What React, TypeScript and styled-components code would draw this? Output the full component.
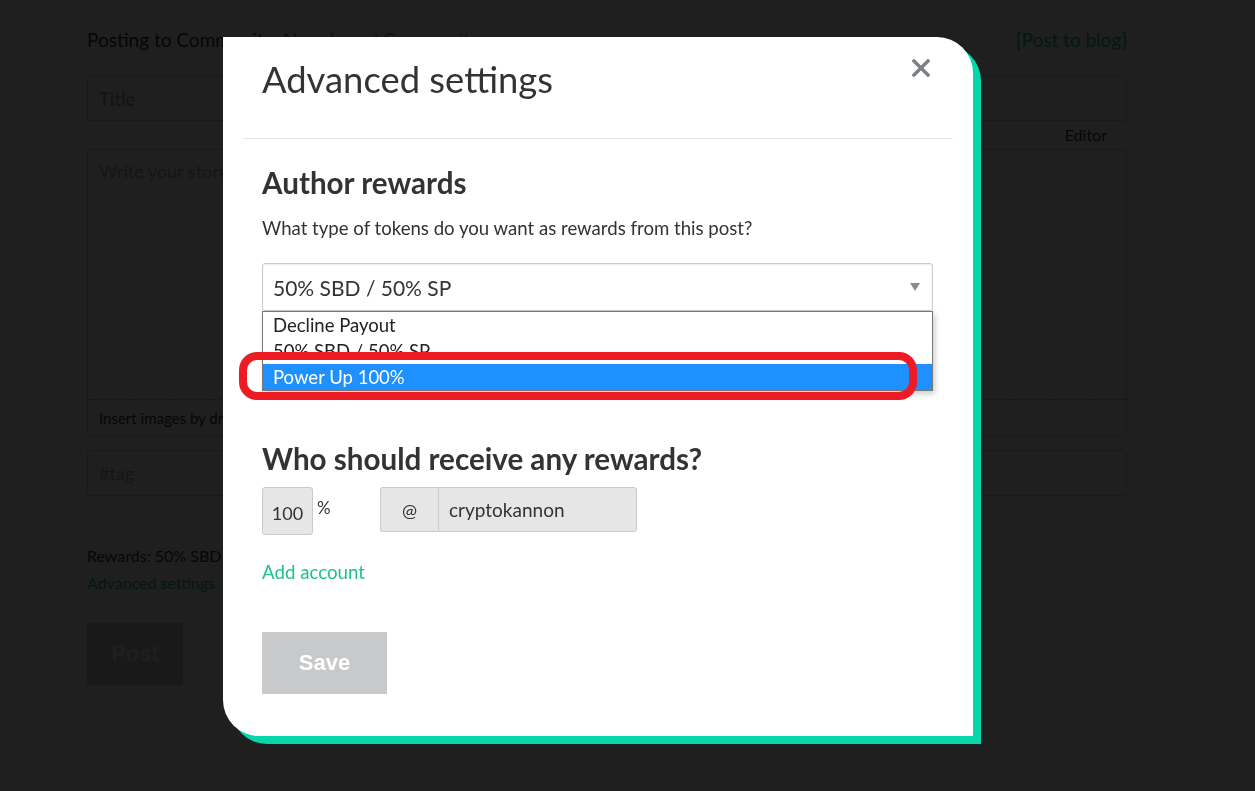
import React from "react";
import styled, { createGlobalStyle } from "styled-components";

const Global = createGlobalStyle`
  html, body { margin: 0; padding: 0; background: #ffffff; }
  body { font-family: Lato, "Source Sans Pro", "Liberation Sans", sans-serif; color: #333; }
  * { box-sizing: border-box; }
`;

const FONT = `Lato, "Liberation Sans", sans-serif`;

/* ---------- underlying page ---------- */
const Page = styled.div`
  width: 1255px;
  height: 791px;
  overflow: hidden;
  background: #fff;
  padding: 28px 128px 0 87px;
  font-family: ${FONT};
`;

const TopLine = styled.div`
  display: flex;
  justify-content: space-between;
  font-size: 19px;
  line-height: 24px;
  color: #333;
`;

const GreenLink = styled.span`
  color: #1fbf8f;
`;

const PageInput = styled.div<{ $h: number }>`
  height: ${(p) => p.$h}px;
  border: 1px solid #cacaca;
  border-radius: 3px;
  padding: 0 11px;
  display: flex;
  align-items: center;
  font-size: 18px;
  color: #aaa;
`;

const TitleInput = styled(PageInput)`
  margin-top: 24px;
  font-weight: 700;
`;

const EditorLabel = styled.div`
  text-align: right;
  padding-right: 20px;
  font-size: 16px;
  line-height: 28px;
  color: #333;
`;

const TextArea = styled.div`
  border: 1px solid #cacaca;
  border-radius: 3px;
  height: 287px;
  display: flex;
  flex-direction: column;
`;

const TextAreaBody = styled.div`
  flex: 1;
  padding: 10px 11px;
  font-size: 18px;
  color: #aaa;
`;

const DropZone = styled.div`
  height: 36px;
  border-top: 1px dashed #aaa;
  padding: 0 11px;
  display: flex;
  align-items: center;
  font-size: 15px;
  color: #333;
`;

const TagInput = styled(PageInput)`
  margin-top: 14px;
`;

const RewardsText = styled.div`
  margin-top: 46px;
  font-size: 16px;
  line-height: 27px;
  color: #333;
`;

const AdvancedLink = styled.div`
  font-size: 16px;
  line-height: 27px;
  color: #1fbf8f;
`;

const GrayButton = styled.div<{ $w: number }>`
  width: ${(p) => p.$w}px;
  height: 62px;
  background: #c8c9cb;
  color: #fff;
  font-family: "Liberation Sans", Arial, sans-serif;
  font-weight: 700;
  font-size: 22px;
  display: flex;
  align-items: center;
  justify-content: center;
`;

const PostButton = styled(GrayButton)`
  margin-top: 27px;
`;

/* ---------- overlay & modal ---------- */
const Overlay = styled.div`
  position: fixed;
  inset: 0;
  background: rgba(0, 0, 0, 0.878);
`;

const Modal = styled.div`
  position: fixed;
  left: 223px;
  top: 37px;
  width: 750px;
  background: #fff;
  border-radius: 0 36px 0 36px;
  box-shadow: 8px 8px 0 #06d6a9;
  padding: 0 20px 42px;
  font-family: ${FONT};
`;

const Header = styled.div`
  display: flex;
  justify-content: space-between;
  align-items: flex-start;
  padding: 19px 22px 36px 19px;
  border-bottom: 1px solid #e7e7e7;
`;

const Title = styled.h2`
  margin: 0;
  font-size: 36.4px;
  line-height: 46px;
  font-weight: 400;
  color: #333;
`;

const Close = styled.button`
  margin-top: 2px;
  width: 20px;
  height: 20px;
  padding: 0;
  border: 0;
  background: none;
  display: flex;
  align-items: center;
  justify-content: center;
`;

const Body = styled.div`
  padding: 0 20px 0 19px;
`;

const SectionTitle = styled.h3<{ $mt: number }>`
  margin: ${(p) => p.$mt}px 0 0;
  font-size: 29.6px;
  line-height: 34px;
  font-weight: 700;
  color: #333;
`;

const Desc = styled.p`
  margin: 15px 0 0;
  font-size: 18.6px;
  line-height: 26px;
  color: #333;
`;

const SelectWrap = styled.div`
  position: relative;
  margin-top: 22px;
`;

const SelectBox = styled.div`
  height: 48px;
  border: 1px solid #cacaca;
  border-radius: 3px;
  display: flex;
  align-items: center;
  justify-content: space-between;
  padding: 0 12px 0 10px;
  font-size: 21px;
  color: #333;
  box-shadow: inset 0 1px 2px rgba(0, 0, 0, 0.08);
`;

const Arrow = styled.span`
  width: 0;
  height: 0;
  border-left: 5px solid transparent;
  border-right: 5px solid transparent;
  border-top: 8px solid #8a8a8a;
`;

const OptionList = styled.div`
  position: absolute;
  left: 0;
  right: 0;
  top: 48px;
  border: 1px solid #767676;
  background: #fff;
  box-shadow: 2px 3px 6px rgba(0, 0, 0, 0.2);
  z-index: 2;
`;

const Option = styled.div<{ $active?: boolean }>`
  height: 26px;
  line-height: 26px;
  padding: 0 10px;
  font-size: 18.5px;
  color: ${(p) => (p.$active ? "#fff" : "#222")};
  background: ${(p) => (p.$active ? "#1e90ff" : "transparent")};
`;

const Annotation = styled.div`
  position: absolute;
  left: -23px;
  top: 89px;
  width: 678px;
  height: 48px;
  border: 8px solid #ed1c24;
  border-radius: 18px;
  z-index: 3;
`;

const BeneRow = styled.div`
  display: flex;
  align-items: flex-start;
  margin-top: 11px;
`;

const PercentGroup = styled.div`
  width: 118px;
  display: flex;
  align-items: flex-start;
`;

const Field = styled.div<{ $w: number; $h: number; $center?: boolean }>`
  width: ${(p) => p.$w}px;
  height: ${(p) => p.$h}px;
  background: #e6e6e6;
  border: 1px solid #cacaca;
  display: flex;
  align-items: center;
  justify-content: ${(p) => (p.$center ? "center" : "flex-start")};
  padding: 0 10px;
  font-size: 19px;
  color: #333;
`;

const PercentField = styled(Field)`
  border-radius: 3px;
  padding-top: 4px;
  font-size: 18px;
`;

const Percent = styled.span`
  margin: 10px 0 0 4px;
  font-size: 17px;
  color: #333;
`;

const AtField = styled(Field)`
  border-radius: 3px 0 0 3px;
  border-right: 0;
  font-size: 18px;
`;

const NameField = styled(Field)`
  border-radius: 0 3px 3px 0;
`;

const AddAccount = styled.div`
  margin-top: 24px;
  font-size: 18.7px;
  line-height: 26px;
  color: #1fbf8f;
`;

const SaveButton = styled(GrayButton)`
  margin-top: 47px;
`;

export default function App() {
  return (
    <>
      <Global />
      <Page>
        <TopLine>
          <span>
            Posting to Community: <GreenLink>Newsboard Community</GreenLink>
          </span>
          <GreenLink>[Post to blog]</GreenLink>
        </TopLine>
        <TitleInput $h={45}>Title</TitleInput>
        <EditorLabel>Editor</EditorLabel>
        <TextArea>
          <TextAreaBody>Write your story...</TextAreaBody>
          <DropZone>
            Insert images by dragging &amp; dropping, pasting from the clipboard, or by selecting them.
          </DropZone>
        </TextArea>
        <TagInput $h={46}>#tag</TagInput>
        <RewardsText>Rewards: 50% SBD / 50% SP</RewardsText>
        <AdvancedLink>Advanced settings</AdvancedLink>
        <PostButton $w={96}>Post</PostButton>
      </Page>
      <Overlay />
      <Modal>
        <Header>
          <Title>Advanced settings</Title>
          <Close aria-label="Close">
            <svg width="18" height="18" viewBox="0 0 18 18">
              <path d="M2 2 L16 16 M16 2 L2 16" stroke="#7b8189" strokeWidth="3.4" strokeLinecap="square" />
            </svg>
          </Close>
        </Header>
        <Body>
          <SectionTitle $mt={27}>Author rewards</SectionTitle>
          <Desc>What type of tokens do you want as rewards from this post?</Desc>
          <SelectWrap>
            <SelectBox>
              <span>50% SBD / 50% SP</span>
              <Arrow />
            </SelectBox>
            <OptionList>
              <Option>Decline Payout</Option>
              <Option>50% SBD / 50% SP</Option>
              <Option $active>Power Up 100%</Option>
            </OptionList>
            <Annotation />
          </SelectWrap>
          <SectionTitle $mt={131}>Who should receive any rewards?</SectionTitle>
          <BeneRow>
            <PercentGroup>
              <PercentField $w={51} $h={48} $center>100</PercentField>
              <Percent>%</Percent>
            </PercentGroup>
            <AtField $w={58} $h={45} $center>@</AtField>
            <NameField $w={199} $h={45}>cryptokannon</NameField>
          </BeneRow>
          <AddAccount>Add account</AddAccount>
          <SaveButton $w={125}>Save</SaveButton>
        </Body>
      </Modal>
    </>
  );
}
